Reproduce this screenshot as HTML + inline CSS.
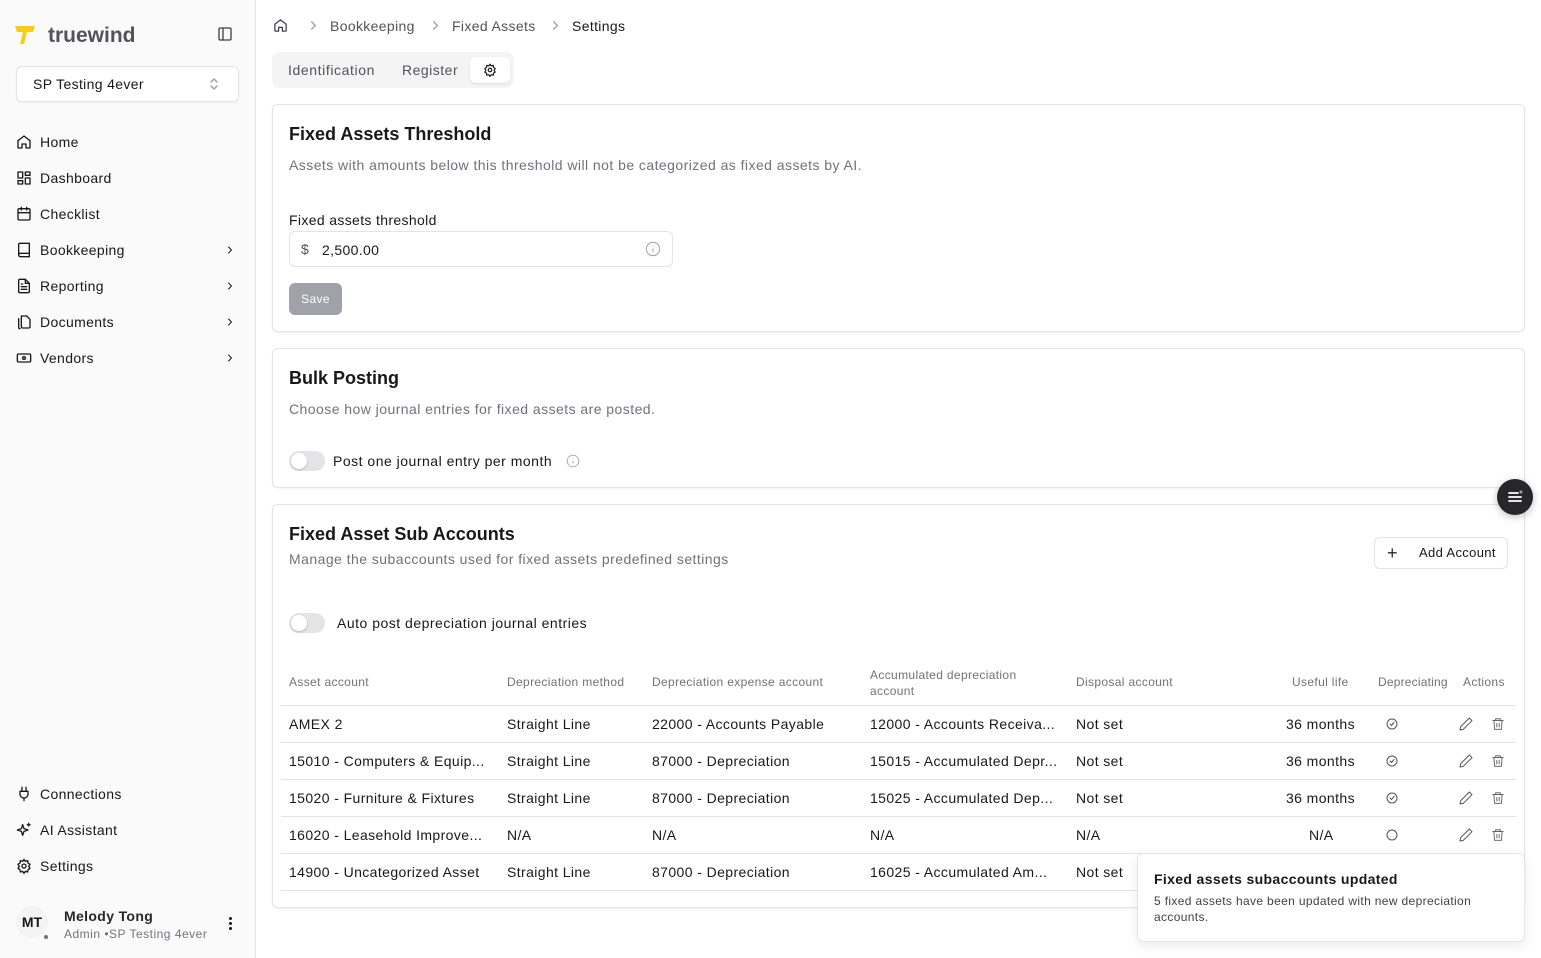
<!DOCTYPE html>
<html><head><meta charset="utf-8"><style>
*{box-sizing:border-box;margin:0;padding:0}
body{width:1541px;height:958px;overflow:hidden;font-family:"Liberation Sans",sans-serif;color:#18181b;background:#fff;position:relative;font-size:14px;letter-spacing:.35px}
.a{position:absolute}
.side{left:0;top:0;width:256px;height:958px;background:#fafafa;border-right:1px solid #e4e4e7}
.nav{left:16px;width:224px;height:20px;display:flex;align-items:center;font-size:14px;color:#18181b}
.nav svg{width:16px;height:16px;margin-right:8px;flex:none}
.nav .ch{margin-left:auto;margin-right:4px;width:12px;height:12px}
.card{left:272px;width:1253px;border:1px solid #e4e4e7;border-radius:6px;background:#fff;box-shadow:0 1px 2px rgba(0,0,0,.05)}
.h{font-size:18px;font-weight:bold;color:#18181b;letter-spacing:0}
.sub{font-size:14px;color:#71717a;letter-spacing:.45px}
.tog{width:36px;height:20px;border-radius:10px;background:#e4e4e7}
.tog:after{content:"";position:absolute;left:2px;top:2px;width:16px;height:16px;border-radius:50%;background:#fff;box-shadow:0 1px 2px rgba(0,0,0,.2)}
.th{font-size:12px;color:#71717a;letter-spacing:.35px}
.td{font-size:14px;color:#18181b;white-space:nowrap;letter-spacing:.4px}
.line{left:281px;width:1235px;height:1px;background:#e4e4e7}
svg{stroke:currentColor;fill:none;stroke-width:2;stroke-linecap:round;stroke-linejoin:round}
</style></head><body>
<div class="a side"></div>
<svg class="a" style="left:14px;top:24px;width:22px;height:22px" viewBox="0 0 22 22"><path d="M1 2h20l-2 6h-6l-3 12H6l3-12H3z" fill="#facc15" stroke="none"/></svg>
<div class="a" style="left:48px;top:24px;font-size:21px;font-weight:bold;color:#52525b;letter-spacing:0">truewind</div>
<svg class="a" style="left:217px;top:26px;width:16px;height:16px;color:#3f3f46" viewBox="0 0 24 24"><rect x="3" y="3" width="18" height="18" rx="2"/><path d="M9 3v18"/></svg>
<div class="a" style="left:16px;top:66px;width:223px;height:36px;border:1px solid #e4e4e7;border-radius:6px;background:#fff;box-shadow:0 1px 2px rgba(0,0,0,.05)"></div>
<div class="a" style="left:33px;top:76px;font-size:14px">SP Testing 4ever</div>
<svg class="a" style="left:208px;top:77px;width:12px;height:14px;color:#a1a1aa;stroke-width:1.5" viewBox="0 0 12 14"><path d="M3 5l3-3 3 3M3 9l3 3 3-3"/></svg>

<div class="a nav" style="top:132px"><svg viewBox="0 0 24 24"><path d="M3 10l9-7 9 7v10a1 1 0 0 1-1 1h-5v-6H9v6H4a1 1 0 0 1-1-1z"/></svg>Home</div>
<div class="a nav" style="top:168px"><svg viewBox="0 0 24 24"><rect x="3" y="3" width="7" height="9"/><rect x="14" y="3" width="7" height="5"/><rect x="14" y="12" width="7" height="9"/><rect x="3" y="16" width="7" height="5"/></svg>Dashboard</div>
<div class="a nav" style="top:204px"><svg viewBox="0 0 24 24"><rect x="3" y="4" width="18" height="17" rx="2"/><path d="M8 2v4M16 2v4M3 10h18"/></svg>Checklist</div>
<div class="a nav" style="top:240px"><svg viewBox="0 0 24 24"><path d="M4 19.5V4a2 2 0 0 1 2-2h14v20H6.5A2.5 2.5 0 0 1 4 19.5zM4 19.5A2.5 2.5 0 0 1 6.5 17H20"/></svg>Bookkeeping<svg class="ch" viewBox="0 0 24 24"><path d="M9 6l6 6-6 6"/></svg></div>
<div class="a nav" style="top:276px"><svg viewBox="0 0 24 24"><path d="M14 2H6a2 2 0 0 0-2 2v16a2 2 0 0 0 2 2h12a2 2 0 0 0 2-2V8zM14 2v6h6M8 13h8M8 17h8M8 9h2"/></svg>Reporting<svg class="ch" viewBox="0 0 24 24"><path d="M9 6l6 6-6 6"/></svg></div>
<div class="a nav" style="top:312px"><svg viewBox="0 0 24 24"><path d="M8 3h8l5 5v11a2 2 0 0 1-2 2h-9a2 2 0 0 1-2-2V5a2 2 0 0 1 2-2zM4 7v13a2 2 0 0 0 2 2"/></svg>Documents<svg class="ch" viewBox="0 0 24 24"><path d="M9 6l6 6-6 6"/></svg></div>
<div class="a nav" style="top:348px"><svg viewBox="0 0 24 24"><rect x="2" y="6" width="20" height="12" rx="2"/><circle cx="12" cy="12" r="2"/></svg>Vendors<svg class="ch" viewBox="0 0 24 24"><path d="M9 6l6 6-6 6"/></svg></div>

<div class="a nav" style="top:784px"><svg viewBox="0 0 24 24"><path d="M9 2v6M15 2v6M6 8h12v4a6 6 0 0 1-12 0zM12 18v4"/></svg>Connections</div>
<div class="a nav" style="top:820px"><svg viewBox="0 0 24 24"><path d="M10 4l2 6 6 2-6 2-2 6-2-6-6-2 6-2zM19 2v4M17 4h4"/></svg>AI Assistant</div>
<div class="a nav" style="top:856px"><svg viewBox="0 0 24 24"><circle cx="12" cy="12" r="3"/><path d="M12 2l2 3 3.5-1 .5 3.5 3 2-2 3 2 3-3 2-.5 3.5-3.5-1-2 3-2-3-3.5 1-.5-3.5-3-2 2-3-2-3 3-2 .5-3.5 3.5 1z"/></svg>Settings</div>
<div class="a" style="left:16px;top:906px;width:32px;height:32px;border-radius:50%;background:#f4f4f5;font-size:14px;font-weight:bold;text-align:center;line-height:32px;letter-spacing:0">MT</div>
<div class="a" style="left:44px;top:935px;width:4px;height:4px;border-radius:50%;background:#71717a"></div>
<div class="a" style="left:64px;top:908px;font-size:14px;font-weight:bold;color:#27272a">Melody Tong</div>
<div class="a" style="left:64px;top:927px;font-size:12px;color:#71717a;letter-spacing:.5px">Admin •SP Testing 4ever</div>
<div class="a" style="left:229px;top:916px;width:3px;height:15px;background:radial-gradient(circle,#18181b 1.4px,transparent 1.6px) 0 0/3px 5px"></div>

<svg class="a" style="left:273px;top:18px;width:15px;height:15px;color:#3f3f46" viewBox="0 0 24 24"><path d="M3 10l9-7 9 7v10a1 1 0 0 1-1 1h-5v-6H9v6H4a1 1 0 0 1-1-1z"/></svg>
<svg class="a" style="left:309px;top:21px;width:9px;height:9px;color:#a1a1aa;stroke-width:1.5" viewBox="0 0 10 10"><path d="M3 1l4 4-4 4"/></svg>
<div class="a" style="left:330px;top:18px;color:#52525b">Bookkeeping</div>
<svg class="a" style="left:431px;top:21px;width:9px;height:9px;color:#a1a1aa;stroke-width:1.5" viewBox="0 0 10 10"><path d="M3 1l4 4-4 4"/></svg>
<div class="a" style="left:452px;top:18px;color:#52525b">Fixed Assets</div>
<svg class="a" style="left:551px;top:21px;width:9px;height:9px;color:#a1a1aa;stroke-width:1.5" viewBox="0 0 10 10"><path d="M3 1l4 4-4 4"/></svg>
<div class="a" style="left:572px;top:18px">Settings</div>
<div class="a" style="left:272px;top:52px;width:242px;height:36px;background:#f4f4f5;border-radius:8px"></div>
<div class="a" style="left:288px;top:62px;font-size:14px;color:#52525b;letter-spacing:.6px">Identification</div>
<div class="a" style="left:402px;top:62px;font-size:14px;color:#52525b;letter-spacing:.5px">Register</div>
<div class="a" style="left:470px;top:57px;width:40px;height:26px;background:#fff;border-radius:6px;box-shadow:0 1px 2px rgba(0,0,0,.1)"></div>
<svg class="a" style="left:483px;top:63px;width:14px;height:14px" viewBox="0 0 24 24"><circle cx="12" cy="12" r="3"/><path d="M12 2l2 3 3.5-1 .5 3.5 3 2-2 3 2 3-3 2-.5 3.5-3.5-1-2 3-2-3-3.5 1-.5-3.5-3-2 2-3-2-3 3-2 .5-3.5 3.5 1z"/></svg>

<div class="a card" style="top:104px;height:228px"></div>
<div class="a h" style="left:289px;top:124px">Fixed Assets Threshold</div>
<div class="a sub" style="left:289px;top:157px">Assets with amounts below this threshold will not be categorized as fixed assets by AI.</div>
<div class="a" style="left:289px;top:212px;font-size:14px">Fixed assets threshold</div>
<div class="a" style="left:289px;top:231px;width:384px;height:36px;border:1px solid #e4e4e7;border-radius:6px"></div>
<div class="a" style="left:301px;top:241px;font-size:14px;color:#52525b">$</div>
<div class="a" style="left:322px;top:242px;font-size:14px">2,500.00</div>
<svg class="a" style="left:645px;top:241px;width:16px;height:16px;color:#a1a1aa;stroke-width:1.5" viewBox="0 0 24 24"><circle cx="12" cy="12" r="10"/><path d="M12 16v-4M12 8h0"/></svg>
<div class="a" style="left:289px;top:283px;width:53px;height:32px;border-radius:6px;background:#a1a1aa;color:#fff;font-size:12px;text-align:center;line-height:32px">Save</div>

<div class="a card" style="top:348px;height:140px"></div>
<div class="a h" style="left:289px;top:368px">Bulk Posting</div>
<div class="a sub" style="left:289px;top:401px">Choose how journal entries for fixed assets are posted.</div>
<div class="a tog" style="left:289px;top:451px"></div>
<div class="a" style="left:333px;top:453px;font-size:14px;letter-spacing:.5px">Post one journal entry per month</div>
<svg class="a" style="left:566px;top:454px;width:14px;height:14px;color:#a1a1aa;stroke-width:1.5" viewBox="0 0 24 24"><circle cx="12" cy="12" r="10"/><path d="M12 16v-4M12 8h0"/></svg>

<div class="a card" style="top:504px;height:404px"></div>
<div class="a h" style="left:289px;top:524px">Fixed Asset Sub Accounts</div>
<div class="a sub" style="left:289px;top:551px">Manage the subaccounts used for fixed assets predefined settings</div>
<div class="a" style="left:1374px;top:537px;width:134px;height:32px;border:1px solid #e4e4e7;border-radius:6px"></div>
<div class="a" style="left:1387px;top:543px;font-size:18px;color:#27272a">+</div>
<div class="a" style="left:1419px;top:545px;font-size:13px">Add Account</div>
<div class="a tog" style="left:289px;top:613px"></div>
<div class="a" style="left:337px;top:615px;font-size:14px;letter-spacing:.5px">Auto post depreciation journal entries</div>

<div class="a th" style="left:289px;top:675px">Asset account</div>
<div class="a th" style="left:507px;top:675px">Depreciation method</div>
<div class="a th" style="left:652px;top:675px">Depreciation expense account</div>
<div class="a th" style="left:870px;top:667px;line-height:16px">Accumulated depreciation<br>account</div>
<div class="a th" style="left:1076px;top:675px">Disposal account</div>
<div class="a th" style="left:1292px;top:675px">Useful life</div>
<div class="a th" style="left:1378px;top:675px;letter-spacing:.2px">Depreciating</div>
<div class="a th" style="left:1463px;top:675px">Actions</div>
<div class="a line" style="top:705px"></div>

<div class="a td" style="left:289px;top:716px">AMEX 2</div><div class="a td" style="left:507px;top:716px">Straight Line</div><div class="a td" style="left:652px;top:716px">22000 - Accounts Payable</div><div class="a td" style="left:870px;top:716px">12000 - Accounts Receiva...</div><div class="a td" style="left:1076px;top:716px">Not set</div><div class="a td" style="left:1286px;top:716px">36 months</div>
<div class="a line" style="top:742px"></div>
<div class="a td" style="left:289px;top:753px">15010 - Computers &amp; Equip...</div><div class="a td" style="left:507px;top:753px">Straight Line</div><div class="a td" style="left:652px;top:753px">87000 - Depreciation</div><div class="a td" style="left:870px;top:753px">15015 - Accumulated Depr...</div><div class="a td" style="left:1076px;top:753px">Not set</div><div class="a td" style="left:1286px;top:753px">36 months</div>
<div class="a line" style="top:779px"></div>
<div class="a td" style="left:289px;top:790px">15020 - Furniture &amp; Fixtures</div><div class="a td" style="left:507px;top:790px">Straight Line</div><div class="a td" style="left:652px;top:790px">87000 - Depreciation</div><div class="a td" style="left:870px;top:790px">15025 - Accumulated Dep...</div><div class="a td" style="left:1076px;top:790px">Not set</div><div class="a td" style="left:1286px;top:790px">36 months</div>
<div class="a line" style="top:816px"></div>
<div class="a td" style="left:289px;top:827px">16020 - Leasehold Improve...</div><div class="a td" style="left:507px;top:827px">N/A</div><div class="a td" style="left:652px;top:827px">N/A</div><div class="a td" style="left:870px;top:827px">N/A</div><div class="a td" style="left:1076px;top:827px">N/A</div><div class="a td" style="left:1309px;top:827px">N/A</div>
<div class="a line" style="top:853px"></div>
<div class="a td" style="left:289px;top:864px">14900 - Uncategorized Asset</div><div class="a td" style="left:507px;top:864px">Straight Line</div><div class="a td" style="left:652px;top:864px">87000 - Depreciation</div><div class="a td" style="left:870px;top:864px">16025 - Accumulated Am...</div><div class="a td" style="left:1076px;top:864px">Not set</div>
<div class="a line" style="top:890px"></div>

<svg class="a" style="left:1386px;top:718px;width:12px;height:12px;color:#52525b;stroke-width:2" viewBox="0 0 24 24"><circle cx="12" cy="12" r="10"/><path d="M8 12l3 3 5-6"/></svg>
<svg class="a" style="left:1386px;top:755px;width:12px;height:12px;color:#52525b;stroke-width:2" viewBox="0 0 24 24"><circle cx="12" cy="12" r="10"/><path d="M8 12l3 3 5-6"/></svg>
<svg class="a" style="left:1386px;top:792px;width:12px;height:12px;color:#52525b;stroke-width:2" viewBox="0 0 24 24"><circle cx="12" cy="12" r="10"/><path d="M8 12l3 3 5-6"/></svg>
<svg class="a" style="left:1386px;top:829px;width:12px;height:12px;color:#52525b;stroke-width:2" viewBox="0 0 24 24"><circle cx="12" cy="12" r="10"/></svg>

<svg class="a" style="left:1458px;top:716px;width:16px;height:16px;color:#52525b;stroke-width:1.5" viewBox="0 0 24 24"><path d="M17 3l4 4L8 20l-5 1 1-5z"/></svg>
<svg class="a" style="left:1491px;top:716px;width:14px;height:16px;color:#52525b;stroke-width:1.5" viewBox="0 0 24 24"><path d="M3 6h18M8 6V3h8v3M5 6l1 15h12l1-15M10 11v6M14 11v6"/></svg>
<svg class="a" style="left:1458px;top:753px;width:16px;height:16px;color:#52525b;stroke-width:1.5" viewBox="0 0 24 24"><path d="M17 3l4 4L8 20l-5 1 1-5z"/></svg>
<svg class="a" style="left:1491px;top:753px;width:14px;height:16px;color:#52525b;stroke-width:1.5" viewBox="0 0 24 24"><path d="M3 6h18M8 6V3h8v3M5 6l1 15h12l1-15M10 11v6M14 11v6"/></svg>
<svg class="a" style="left:1458px;top:790px;width:16px;height:16px;color:#52525b;stroke-width:1.5" viewBox="0 0 24 24"><path d="M17 3l4 4L8 20l-5 1 1-5z"/></svg>
<svg class="a" style="left:1491px;top:790px;width:14px;height:16px;color:#52525b;stroke-width:1.5" viewBox="0 0 24 24"><path d="M3 6h18M8 6V3h8v3M5 6l1 15h12l1-15M10 11v6M14 11v6"/></svg>
<svg class="a" style="left:1458px;top:827px;width:16px;height:16px;color:#52525b;stroke-width:1.5" viewBox="0 0 24 24"><path d="M17 3l4 4L8 20l-5 1 1-5z"/></svg>
<svg class="a" style="left:1491px;top:827px;width:14px;height:16px;color:#52525b;stroke-width:1.5" viewBox="0 0 24 24"><path d="M3 6h18M8 6V3h8v3M5 6l1 15h12l1-15M10 11v6M14 11v6"/></svg>

<div class="a" style="left:1137px;top:853px;width:388px;height:89px;background:#fff;border:1px solid #e4e4e7;border-radius:6px;box-shadow:0 4px 12px rgba(0,0,0,.08)"></div>
<div class="a" style="left:1154px;top:871px;font-size:14px;font-weight:bold">Fixed assets subaccounts updated</div>
<div class="a" style="left:1154px;top:893px;width:350px;font-size:12px;line-height:16px;color:#3f3f46">5 fixed assets have been updated with new depreciation accounts.</div>

<div class="a" style="left:1497px;top:479px;width:36px;height:36px;border-radius:50%;background:#27272a;box-shadow:0 2px 8px rgba(0,0,0,.25)"></div>
<svg class="a" style="left:1506px;top:488px;width:18px;height:18px;color:#fff;stroke-width:1.8" viewBox="0 0 18 18"><path d="M3 5h9M3 9h12M3 13h12"/><circle cx="15" cy="4" r="1.5" fill="#a1a1aa" stroke="none"/></svg>
</body></html>
